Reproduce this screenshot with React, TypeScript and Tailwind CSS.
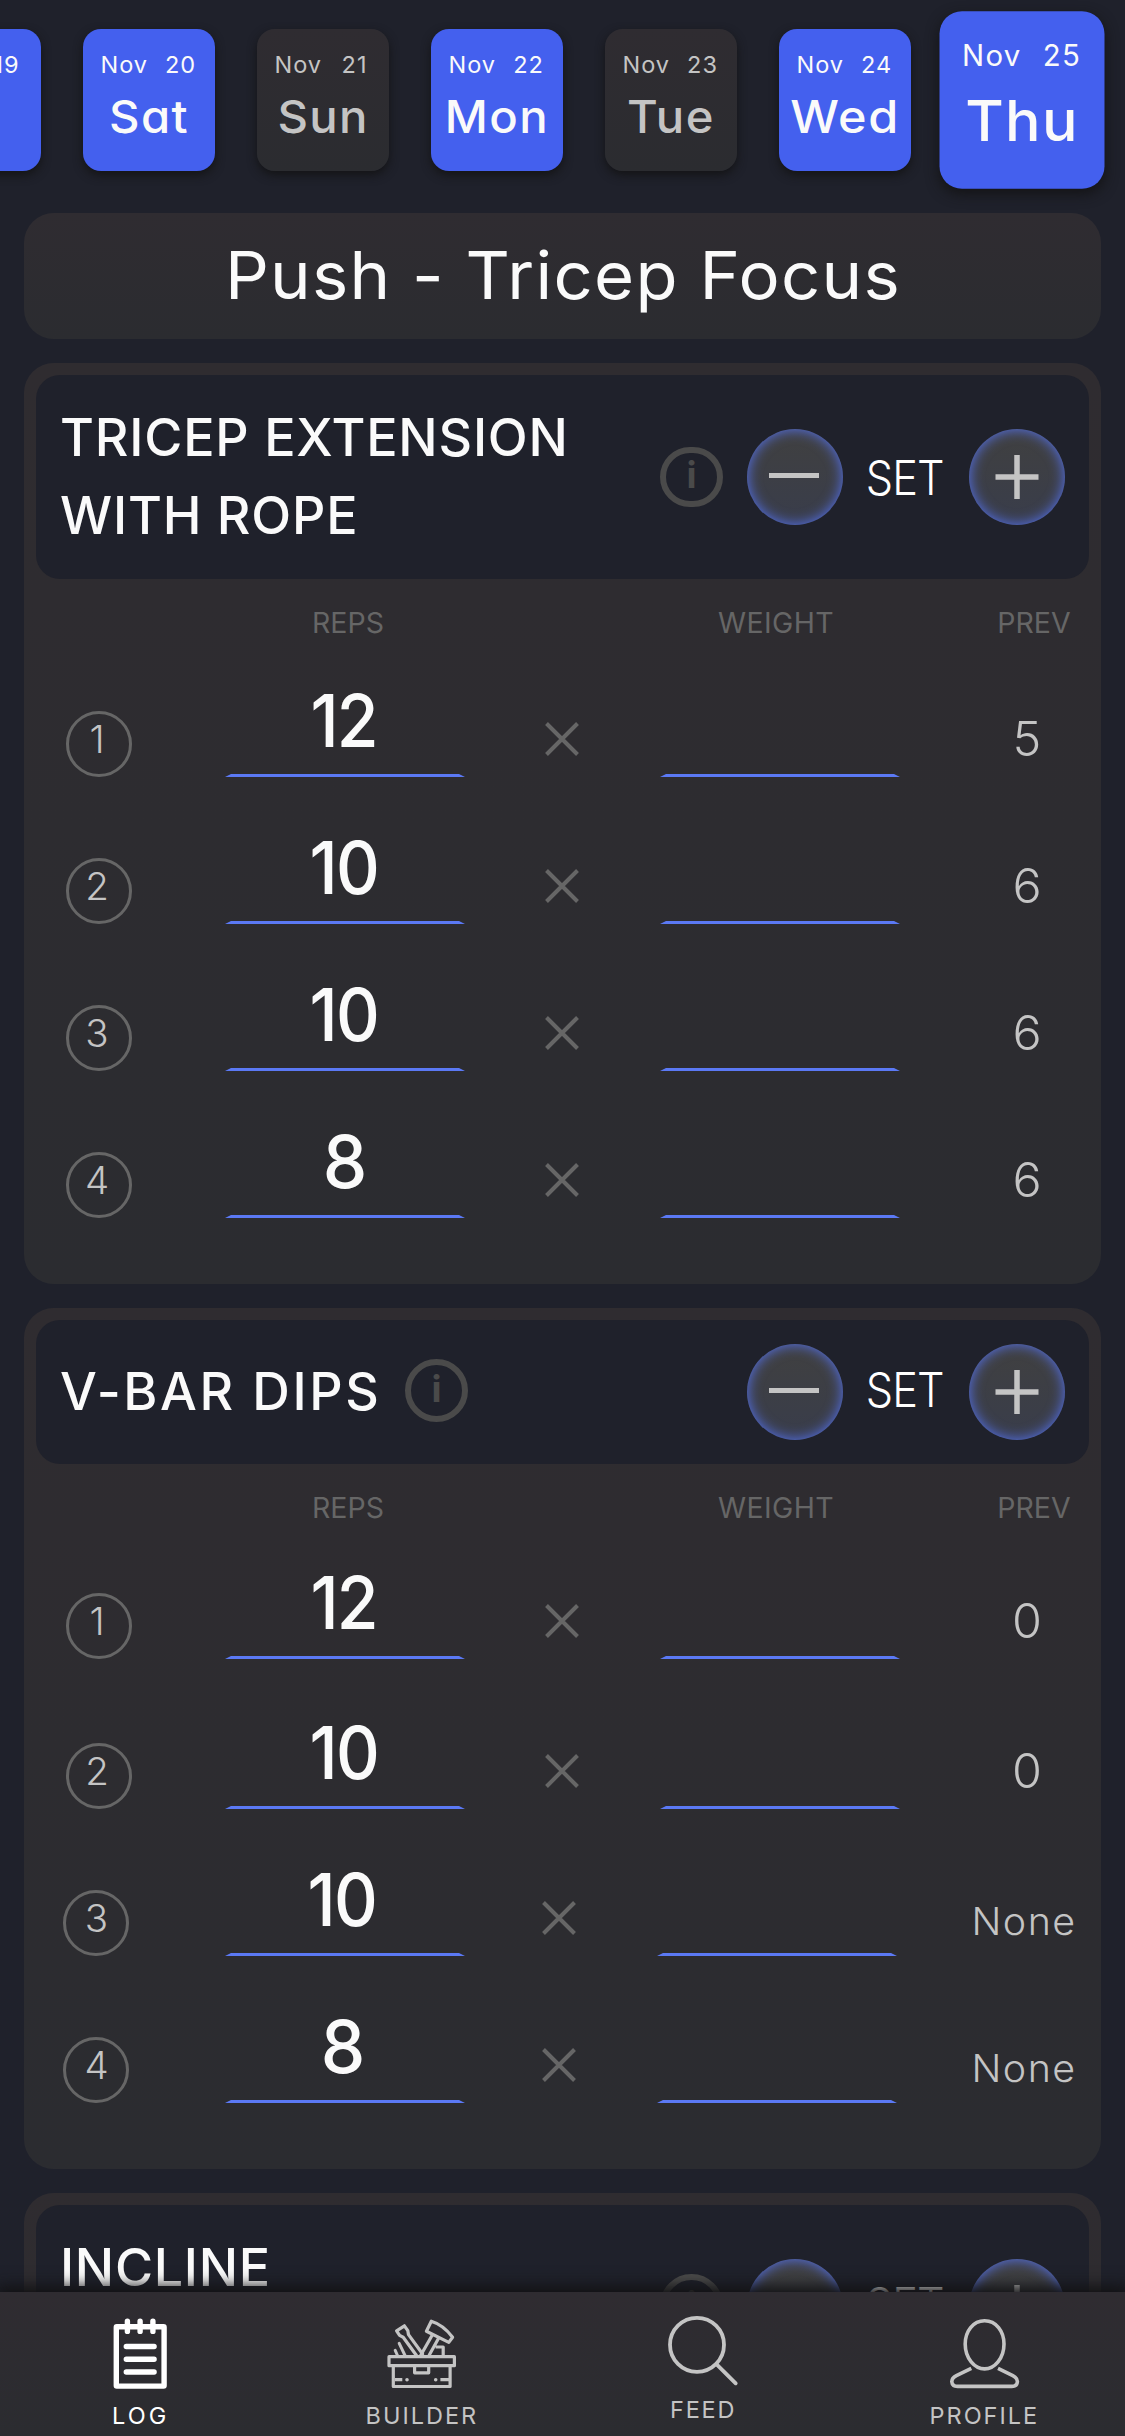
import type { ReactNode } from "react";
import clsx from "clsx";

type Day = { date: string; name: string; tone: "done" | "rest" | "current"; nameClass?: string };

const days: Day[] = [
  { date: "19", name: "Fri", tone: "done", nameClass: "tracking-[-2px] pr-[4px]" },
  { date: "20", name: "Sat", tone: "done", nameClass: "scale-x-105 tracking-[1.4px]" },
  { date: "21", name: "Sun", tone: "rest", nameClass: "scale-x-105 tracking-[1.2px]" },
  { date: "22", name: "Mon", tone: "done", nameClass: "scale-x-105 tracking-[1.4px]" },
  { date: "23", name: "Tue", tone: "rest", nameClass: "scale-x-105 tracking-[1.4px]" },
  { date: "24", name: "Wed", tone: "done", nameClass: "scale-x-108 tracking-[1.4px]" },
  { date: "25", name: "Thu", tone: "current", nameClass: "scale-x-105 tracking-[1px]" },
];

function DayCard({ date, name, tone, nameClass }: Day) {
  return (
    <div
      className={clsx(
        "h-[142px] w-[132px] shrink-0 rounded-[18px] pt-[23px] shadow-[0_4px_10px_#141416]",
        tone === "rest"
          ? "bg-linear-to-b from-[#2f2c31] to-[#2b2c30] text-[#c4c4c4]"
          : "bg-[#4460ee] text-[#fafafa]",
        tone === "current" && "ml-[3px] scale-125",
      )}
    >
      <div className="flex h-[25px] items-center pl-[18px] text-[23.5px] leading-[25px] tracking-[1px]">
        <span className="w-[63px]">Nov</span>
        <span className="w-[34px] text-center">{date}</span>
      </div>
      <div className={clsx("mt-[13px] text-center text-[45px] leading-[54px] font-[480]", nameClass)}>{name}</div>
    </div>
  );
}

function InfoIcon({ className }: { className?: string }) {
  return (
    <span
      className={clsx(
        "flex w-[63px] shrink-0 items-center justify-center rounded-full border-[6px] border-[#4a4a4a] pb-[5px] text-[37px] leading-none font-bold text-[#4a4a4a]",
        className,
      )}
    >
      i
    </span>
  );
}

function RoundButton({ children }: { children: ReactNode }) {
  return (
    <button className="flex size-24 items-center justify-center rounded-full bg-linear-to-b from-[#404040] to-[#393d4b] shadow-[inset_0_0_14px_#5674f5]">
      {children}
    </button>
  );
}

type SetRow = { reps: string; prev: string; nudge?: boolean };
type Exercise = {
  lines: string[];
  rows: SetRow[];
  headerClass: string;
  titleClass: string;
  infoClass: string;
  setClass: string;
  firstRow: string;
  secondRow: string;
};

const exercises: Exercise[] = [
  {
    lines: ["TRICEP EXTENSION", "WITH ROPE"],
    rows: [
      { reps: "12", prev: "5" },
      { reps: "10", prev: "6" },
      { reps: "10", prev: "6" },
      { reps: "8", prev: "6" },
    ],
    headerClass: "h-[204px]",
    titleClass: "w-[601px] h-[157px] tracking-[0.8px]",
    infoClass: "h-[60px]",
    setClass: "mt-[2px]",
    firstRow: "mt-[28px]",
    secondRow: "mt-[64px]",
  },
  {
    lines: ["V-BAR DIPS"],
    rows: [
      { reps: "12", prev: "0" },
      { reps: "10", prev: "0" },
      { reps: "10", prev: "None", nudge: true },
      { reps: "8", prev: "None", nudge: true },
    ],
    headerClass: "h-[144px]",
    titleClass: "w-[346px] tracking-[2.6px]",
    infoClass: "mb-[3px] h-[63px]",
    setClass: "mb-[4px]",
    firstRow: "mt-[25px]",
    secondRow: "mt-[67px]",
  },
  {
    lines: ["INCLINE"],
    rows: [],
    headerClass: "h-[204px]",
    titleClass: "w-[601px] h-[157px] tracking-[0.7px]",
    infoClass: "h-[66px]",
    setClass: "mb-[4px]",
    firstRow: "",
    secondRow: "",
  },
];

function Underline() {
  return <div className="h-[3px] w-full bg-[#5b79f4] [clip-path:polygon(6px_0,calc(100%-6px)_0,100%_100%,0_100%)]" />;
}

function SetLine({ index, row, className }: { index: number; row: SetRow; className: string }) {
  return (
    <div className={clsx("flex h-[83px]", row.nudge ? "pl-[39px]" : "pl-[42px]", className)}>
      <div
        className={clsx(
          "mt-[17px] flex size-[66px] shrink-0 items-center justify-center rounded-full border-[3px] border-[#666] pb-[10px] text-[38.5px] leading-none font-[280] text-[#c4c4c4]",
          row.nudge ? "pr-[1px] pl-[2px]" : "pr-[4px]",
        )}
      >
        {index}
      </div>
      <div className={clsx("flex w-60 shrink-0 flex-col justify-between", row.nudge ? "ml-[96px]" : "ml-[93px]")}>
        <div className={clsx("text-center text-[73px] leading-[53px] font-[480] tracking-[-2px] text-[#fafafa]", row.nudge ? "pr-[6px]" : "pr-[3px]")}>
          <span className={clsx("inline-block", row.reps === "8" ? "scale-x-[.97]" : "scale-x-[.93]")}>{row.reps}</span>
        </div>
        <Underline />
      </div>
      <svg viewBox="0 0 34 34" className={clsx("mt-[28px] size-[34px] shrink-0", row.nudge ? "ml-[77px]" : "ml-[80px]")} fill="none" stroke="#666" strokeWidth="4">
        <path d="M1.5 1.5 32.5 32.5M32.5 1.5 1.5 32.5" />
      </svg>
      <div className="ml-[81px] flex w-60 shrink-0 flex-col justify-end">
        <Underline />
      </div>
      <div
        className={clsx(
          "ml-[53px] w-[148px] shrink-0 text-center font-[280] text-[#c4c4c4]",
          row.prev === "None" ? "pt-px text-[37.5px] leading-[95px] tracking-[1.4px]" : "text-[48.5px] leading-[89px]",
        )}
      >
        <span className={clsx("inline-block", row.prev === "None" && "scale-x-105")}>{row.prev}</span>
      </div>
    </div>
  );
}

function ExerciseCard({ exercise }: { exercise: Exercise }) {
  return (
    <section className="rounded-[30px] bg-linear-to-b from-[#2f2c30] to-[#2b2c30] pt-3">
      <header className={clsx("mx-3 flex items-center rounded-[24px] bg-[#1f212b] pr-6 pl-[24px]", exercise.headerClass)}>
        <h2 className={clsx("-mr-px shrink-0 text-[52px] leading-[78px] font-[460] whitespace-nowrap text-[#fafafa]", exercise.titleClass)}>
          {exercise.lines.map((line) => (
            <span key={line} className="block">
              {line}
            </span>
          ))}
        </h2>
        <InfoIcon className={exercise.infoClass} />
        <div className="ml-auto flex items-center">
          <RoundButton>
            <span className="mr-[2px] mb-[3px] h-[5px] w-[50px] bg-[#c4c4c4]" />
          </RoundButton>
          <span className={clsx("w-[126px] pr-[2px] text-center text-[47.5px] leading-none font-[270] tracking-[-1px] text-white", exercise.setClass)}>
            <span className="inline-block scale-x-[.91]">SET</span>
          </span>
          <RoundButton>
            <svg viewBox="0 0 44 44" className="size-11" stroke="#c4c4c4" strokeWidth="5.5">
              <path d="M0.5 22H43.5M22 0V44" />
            </svg>
          </RoundButton>
        </div>
      </header>
      <div className="flex h-[87px] text-[28.5px] leading-[87px] font-[430] text-[#666]">
        <span className="ml-[201px] w-[246px] text-center">REPS</span>
        <span className="ml-[182px] w-[246px] text-center tracking-[0.4px]">WEIGHT</span>
        <span className="ml-[75px] w-[120px] text-center">PREV</span>
      </div>
      {exercise.rows.map((row, i) => (
        <SetLine
          key={i}
          index={i + 1}
          row={row}
          className={i === 0 ? exercise.firstRow : i === 1 ? exercise.secondRow : "mt-[64px]"}
        />
      ))}
      <div className="h-[66px]" />
    </section>
  );
}

function NotepadIcon() {
  return (
    <svg viewBox="0 0 72 72" className="size-[72px]" fill="none" stroke="currentColor" strokeWidth="5.4" strokeLinecap="round">
      <rect x="11.3" y="8.7" width="47.8" height="59.4" rx="0.5" strokeLinejoin="round" />
      <path d="M22.4 3.2V13.4M35.1 3.2V13.4M47.9 3.2V13.4M21.3 28.5H49.1M21.3 41.2H49.1M21.3 54H49.1" />
    </svg>
  );
}

function ToolboxIcon() {
  return (
    <svg viewBox="0 0 74 74" className="size-[74px]" fill="none" stroke="currentColor" strokeWidth="3.2" strokeLinejoin="round">
      <rect x="4" y="39.7" width="65.4" height="9" />
      <path d="M8.3 49V69.5H65.1V49M29.6 49V55.8H43.7V49" />
      <path d="M10 62.7H17.3M55.4 62.7H64" />
      <path d="M22 62.7h.01M50.7 62.7h.01" strokeLinecap="round" strokeWidth="3.6" />
      <path d="M46.3 4.2 41.4 14.3 63.8 25.4 67.6 20.2C61 11.5 55 6.8 46.3 4.2Z" />
      <path d="M47.3 18 35.6 38.5M53.7 21 44 38.5M50.6 30H58.2V38.5" />
      <path d="M31.5 38.5 18.2 20.2 14.6 18.4 11.6 13.8 19.4 8.8 22.8 13.6 23.5 17.6 37.6 37" strokeLinecap="round" />
      <path d="M14.2 26.3 20 38.5M10.2 33.4 12.5 38.5" strokeLinecap="round" strokeWidth="3" />
    </svg>
  );
}

function SearchIcon() {
  return (
    <svg viewBox="0 0 74 74" className="size-[74px]" fill="none" stroke="currentColor" strokeWidth="3.8" strokeLinecap="round">
      <circle cx="31" cy="30.8" r="27" />
      <path d="M50.9 50.7 69.7 69.3" />
    </svg>
  );
}

function ProfileIcon() {
  return (
    <svg viewBox="0 0 74 74" className="size-[74px]" fill="none" stroke="currentColor" strokeWidth="3.6">
      <path d="M37.6 3.8C49 3.8 57 14 57 27C57 41.5 47.5 51.9 37.6 51.9C27.7 51.9 18.2 41.5 18.2 27C18.2 14 26.2 3.8 37.6 3.8Z" />
      <path d="M24.3 51.3 9.4 58.6Q4.8 61 4.8 64.6Q5.2 69.4 10.5 69.4H64.7Q70 69.4 70.4 64.6Q70.4 61 65.8 58.6L51 51.3" />
    </svg>
  );
}

function NavItem({ icon, label, className, labelClass }: { icon: ReactNode; label: string; className?: string; labelClass: string }) {
  return (
    <a className={clsx("flex flex-1 flex-col items-center", className)}>
      {icon}
      <span className={clsx("text-[23.5px] leading-[24px] font-[440]", labelClass)}>{label}</span>
    </a>
  );
}

export default function App() {
  return (
    <div className="flex h-[2436px] w-[1125px] flex-col overflow-hidden bg-[#1f212b] font-[Inter,sans-serif] [font-feature-settings:'cv11']">
      <main className="min-h-0 flex-1 overflow-hidden">
        <div className="-ml-[91.5px] flex gap-[42px] pt-[29px]">
          {days.map((day) => (
            <DayCard key={day.date} {...day} />
          ))}
        </div>
        <div className="mx-6 mt-[42px] flex flex-col gap-6">
          <h1 className="flex h-[126px] items-center justify-center rounded-[30px] bg-linear-to-b from-[#2f2c31] to-[#2b2c30] text-[65.5px] leading-none font-[370] tracking-[1.2px] text-[#fafafa]">
            <span className="scale-x-[1.05]">Push - Tricep Focus</span>
          </h1>
          {exercises.map((exercise) => (
            <ExerciseCard key={exercise.lines[0]} exercise={exercise} />
          ))}
        </div>
      </main>
      <nav className="relative flex h-36 shrink-0 bg-linear-to-b from-[#2f2c31] to-[#2b2c30] text-[#c4c4c4] shadow-[0_-2px_14px_4px_#121214]">
        <NavItem icon={<NotepadIcon />} label="LOG" className="pt-[26px] text-white" labelClass="mt-[14px] tracking-[3.1px]" />
        <NavItem icon={<ToolboxIcon />} label="BUILDER" className="pt-[25px]" labelClass="mt-[13px] tracking-[2px]" />
        <NavItem icon={<SearchIcon />} label="FEED" className="pt-[22px]" labelClass="mt-[10px] tracking-[1.8px]" />
        <NavItem icon={<ProfileIcon />} label="PROFILE" className="pt-[25px]" labelClass="mt-[13px] tracking-[2px]" />
      </nav>
    </div>
  );
}
